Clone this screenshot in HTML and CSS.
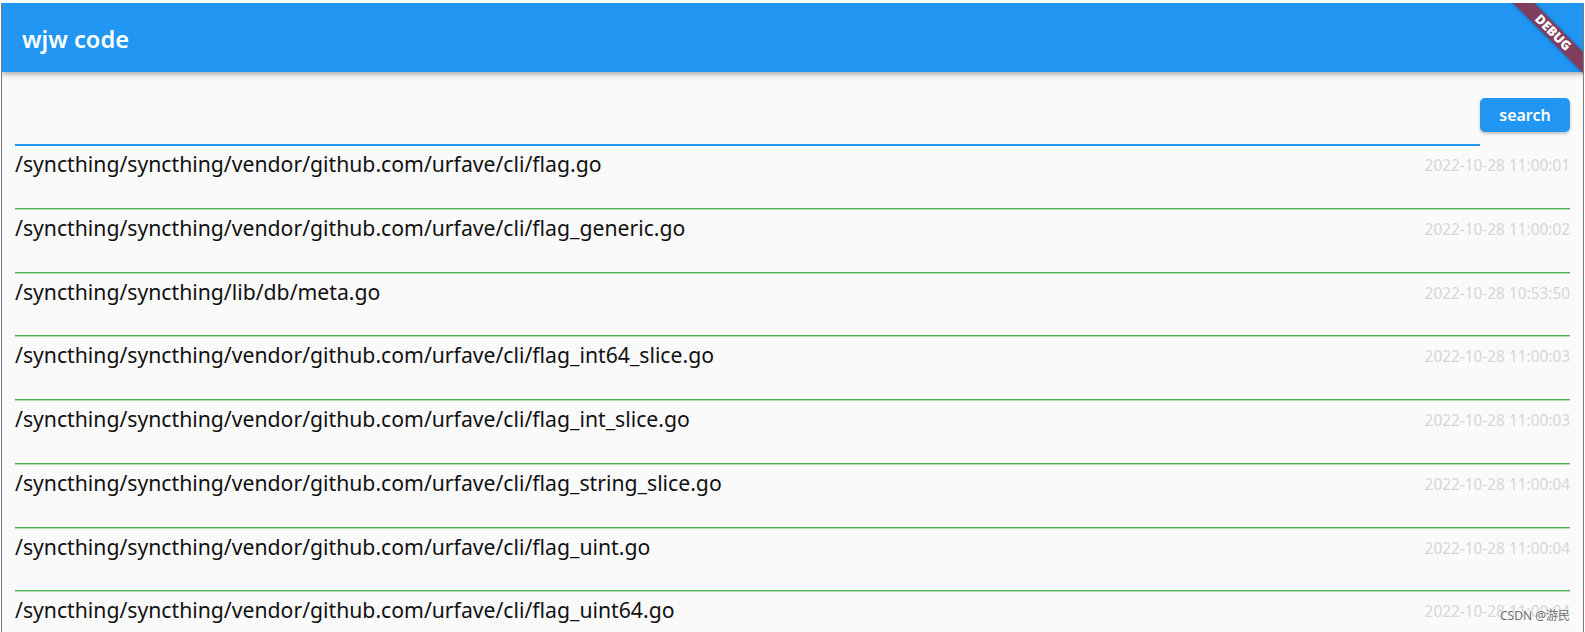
FILE: index.html
```html
<!DOCTYPE html>
<html lang="zh-CN">
<head>
    <meta charset="UTF-8">
    <meta name="viewport" content="width=device-width, initial-scale=1.0">
    <title>wjw code</title>
    <link rel="stylesheet" href="styles.css">
</head>
<body>
    <div class="app-window">
        <header class="app-bar">
            <h1>wjw code</h1>
        </header>
        <div class="debug-banner">DEBUG</div>

        <main class="content">
            <div class="search-row">
                <input type="text" class="search-input" id="search-input">
                <button class="search-btn" id="search-btn">search</button>
            </div>

            <ul class="file-list">
                <li class="file-item">
                    <span class="file-path">/syncthing/syncthing/vendor/github.com/urfave/cli/flag.go</span>
                    <span class="file-time">2022-10-28 11:00:01</span>
                </li>
                <li class="file-item">
                    <span class="file-path">/syncthing/syncthing/vendor/github.com/urfave/cli/flag_generic.go</span>
                    <span class="file-time">2022-10-28 11:00:02</span>
                </li>
                <li class="file-item">
                    <span class="file-path">/syncthing/syncthing/lib/db/meta.go</span>
                    <span class="file-time">2022-10-28 10:53:50</span>
                </li>
                <li class="file-item">
                    <span class="file-path">/syncthing/syncthing/vendor/github.com/urfave/cli/flag_int64_slice.go</span>
                    <span class="file-time">2022-10-28 11:00:03</span>
                </li>
                <li class="file-item">
                    <span class="file-path">/syncthing/syncthing/vendor/github.com/urfave/cli/flag_int_slice.go</span>
                    <span class="file-time">2022-10-28 11:00:03</span>
                </li>
                <li class="file-item">
                    <span class="file-path">/syncthing/syncthing/vendor/github.com/urfave/cli/flag_string_slice.go</span>
                    <span class="file-time">2022-10-28 11:00:04</span>
                </li>
                <li class="file-item">
                    <span class="file-path">/syncthing/syncthing/vendor/github.com/urfave/cli/flag_uint.go</span>
                    <span class="file-time">2022-10-28 11:00:04</span>
                </li>
                <li class="file-item">
                    <span class="file-path">/syncthing/syncthing/vendor/github.com/urfave/cli/flag_uint64.go</span>
                    <span class="file-time">2022-10-28 11:00:04</span>
                </li>
            </ul>
        </main>

        <div class="watermark">CSDN @游民</div>
    </div>
</body>
</html>
```

FILE: styles.css
```css
* {
    margin: 0;
    padding: 0;
    box-sizing: border-box;
}

body {
    font-family: 'Noto Sans', 'Noto Sans CJK SC', sans-serif;
    background: #ffffff;
    height: 632px;
    overflow: hidden;
}

.app-window {
    position: relative;
    margin: 3px 0 0 1px;
    width: 1583px;
    height: 629px;
    border-left: 1px solid #7a7a7a;
    border-right: 1px solid #7a7a7a;
    background: #fafafa;
    overflow: hidden;
}

.app-bar {
    height: 69px;
    background: #2196f3;
    display: flex;
    align-items: center;
    padding-left: 20px;
    box-shadow: 0 2px 4px rgba(0, 0, 0, 0.22), 0 4px 7px rgba(0, 0, 0, 0.1);
    position: relative;
    z-index: 1;
}

.app-bar h1 {
    color: #ffffff;
    font-size: 23.6px;
    font-weight: 600;
    margin-top: 3px;
}

/* flutter debug ribbon */
.debug-banner {
    position: absolute;
    top: 22px;
    right: -40px;
    width: 140px;
    height: 15px;
    line-height: 15px;
    background: #803d5e;
    color: #ffffff;
    font-size: 13px;
    font-weight: 900;
    text-align: center;
    transform: rotate(45deg);
    box-shadow: 0 0 4px rgba(0, 0, 0, 0.35);
    z-index: 2;
}

.content {
    padding: 26px 13px 0 13px;
}

.search-row {
    display: flex;
    align-items: flex-start;
}

.search-input {
    flex: 1;
    height: 48px;
    border: none;
    border-bottom: 2px solid #2196f3;
    background: transparent;
    font-size: 16px;
    outline: none;
}

.search-btn {
    width: 90px;
    height: 34px;
    background: #2196f3;
    color: #ffffff;
    border: none;
    border-radius: 5px;
    font-family: 'Noto Sans', sans-serif;
    font-size: 16px;
    font-weight: 600;
    box-shadow: 0 2px 3px rgba(0, 0, 0, 0.22);
    cursor: pointer;
}

.file-list {
    list-style: none;
    margin-top: -1px;
}

.file-item {
    display: flex;
    justify-content: space-between;
    align-items: flex-start;
    height: 63.75px;
    padding-top: 5px;
    border-bottom: 1px solid #4caf50;
    box-shadow: 0 1px 0 #b3dbb4;
}

.file-path {
    font-size: 21.2px;
    line-height: 28px;
    color: #111111;
}

.file-time {
    font-size: 15.4px;
    line-height: 28px;
    color: #d6d6d6;
    margin-top: 2px;
}

.watermark {
    position: absolute;
    right: 13px;
    bottom: 10px;
    font-size: 12px;
    line-height: 12px;
    color: #6e6e6e;
    text-shadow: 0 0 2px #ffffff;
    z-index: 2;
}
```
